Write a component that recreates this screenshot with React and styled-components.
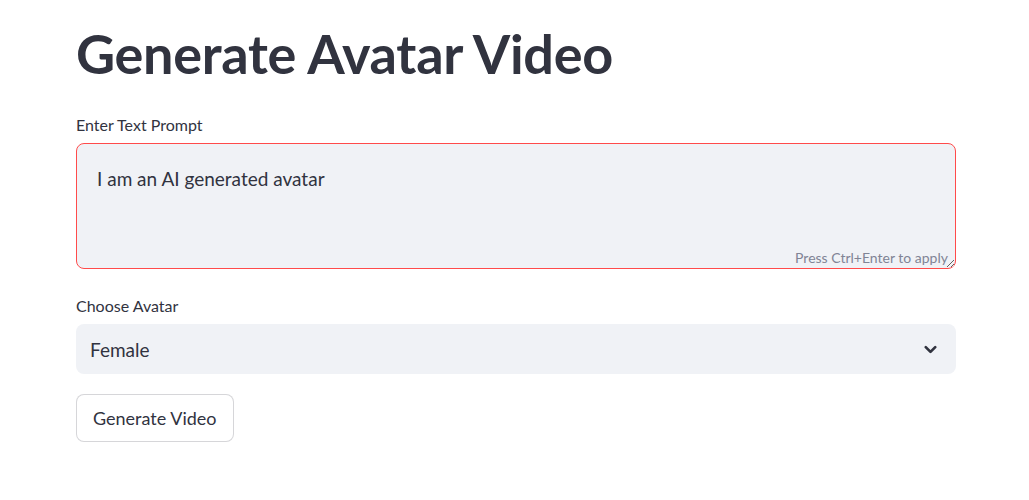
import React from "react";
import styled, { createGlobalStyle } from "styled-components";

const Global = createGlobalStyle`
  body {
    margin: 0;
    background: #ffffff;
    font-family: Lato, "Noto Sans", sans-serif;
    color: #31333f;
  }
`;

const App = () => {
  return (
    <>
      <Global />
      <Page>
        <Title>Generate Avatar Video</Title>
        <Field $gap={27}>
          <Label>Enter Text Prompt</Label>
          <AreaWrap>
            <TextArea defaultValue="I am an AI generated avatar" />
            <Hint>Press Ctrl+Enter to apply</Hint>
          </AreaWrap>
        </Field>
        <Field $gap={20}>
          <Label>Choose Avatar</Label>
          <Select>
            <span>Female</span>
            <svg width="19" height="19" viewBox="0 0 24 24" fill="none" stroke="#31333f" strokeWidth="3.4" strokeLinecap="round" strokeLinejoin="round">
              <path d="M6 9l6 6 6-6" />
            </svg>
          </Select>
        </Field>
        <Button>Generate Video</Button>
      </Page>
    </>
  );
};

export default App;

const Page = styled.div`
  width: 880px;
  margin-left: 76px;
  padding-top: 22px;
  display: flex;
  flex-direction: column;
`;

const Title = styled.h1`
  margin: 0 0 29px;
  font-size: 54px;
  font-weight: 700;
  line-height: 64px;
  color: #31333f;
  letter-spacing: -0.3px;
`;

const Field = styled.div`
  display: flex;
  flex-direction: column;
  margin-bottom: ${(p) => p.$gap}px;
`;

const Label = styled.label`
  font-size: 16px;
  line-height: 20px;
  margin-bottom: 8px;
  color: #31333f;
`;

const AreaWrap = styled.div`
  position: relative;
`;

const TextArea = styled.textarea`
  box-sizing: border-box;
  width: 100%;
  height: 126px;
  display: block;
  resize: vertical;
  border: 1px solid #ff4b4b;
  border-radius: 8px;
  background: #f0f2f6;
  padding: 23px 20px;
  font-family: Lato, "Noto Sans", sans-serif;
  font-size: 19px;
  line-height: 24px;
  color: #31333f;
  outline: none;
`;

const Hint = styled.span`
  position: absolute;
  right: 8px;
  bottom: 3px;
  font-size: 14px;
  color: #808495;
  pointer-events: none;
`;

const Select = styled.div`
  box-sizing: border-box;
  height: 50px;
  background: #f0f2f6;
  border-radius: 8px;
  display: flex;
  align-items: center;
  justify-content: space-between;
  padding: 0 16px 0 14px;
  font-size: 19px;
  color: #31333f;
`;

const Button = styled.button`
  align-self: flex-start;
  height: 48px;
  padding: 0 16px;
  background: #ffffff;
  border: 1px solid rgba(49, 51, 63, 0.2);
  border-radius: 8px;
  font-family: Lato, "Noto Sans", sans-serif;
  font-size: 18px;
  color: #31333f;
  cursor: pointer;
`;
